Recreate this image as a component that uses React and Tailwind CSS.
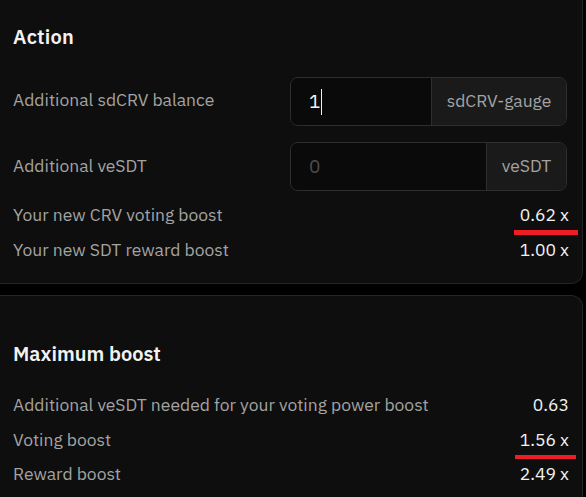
export default function App() {
  const font = { fontFamily: '"IBM Plex Sans", Inter, "Noto Sans", sans-serif' };
  const Val = ({ children, mark }) => (
    <span className="relative inline-block text-[17.5px] leading-[24px] text-[#f2f2f2]">
      {children}
      {mark && <span className={`absolute bg-[#ee1c25] ${mark}`} />}
    </span>
  );
  const Label = ({ children }) => (
    <span className="text-[17.5px] leading-[24px] text-[#a3a3a3]">{children}</span>
  );
  return (
    <div className="h-[497px] w-[586px] overflow-hidden bg-black" style={font}>
      <div className="ml-[-3px] w-[586px] rounded-br-[12px] border-r border-b border-[#232323] bg-[#0e0e0e] pl-[16px] pr-[13px] pt-[23px] pb-[16px]">
        <h2 className="h-[28px] text-[20px] leading-[28px] font-semibold tracking-[0.2px] text-[#f2f2f2]">Action</h2>
        <div className="mt-[26px] flex flex-col gap-[16px]">
          <div className="flex items-center justify-between">
            <div className="mt-[-4px]"><Label>Additional sdCRV balance</Label></div>
            <div className="mr-[2px] flex h-[49px] w-[277px] overflow-hidden rounded-[8px] border border-[#2e2e2e]">
              <div className="flex flex-1 items-center bg-[#0a0a0a] pl-[18px] text-[19px] text-[#f2f2f2]">
                1<span className="ml-[1px] h-[26px] w-[1px] bg-[#f2f2f2]" />
              </div>
              <div className="flex w-[135px] items-center justify-center border-l border-[#2e2e2e] bg-[#1a1a1a] text-[17.5px] text-[#a3a3a3]">sdCRV-gauge</div>
            </div>
          </div>
          <div className="flex items-center justify-between">
            <div className="mt-[-2px]"><Label>Additional veSDT</Label></div>
            <div className="mr-[2px] flex h-[49px] w-[277px] overflow-hidden rounded-[8px] border border-[#2e2e2e]">
              <div className="flex flex-1 items-center bg-[#0a0a0a] pl-[18px] text-[19px] text-[#4d4d4d]">0</div>
              <div className="flex w-[80px] items-center justify-center border-l border-[#2e2e2e] bg-[#1a1a1a] text-[17.5px] text-[#a3a3a3]">veSDT</div>
            </div>
          </div>
        </div>
        <div className="mt-[6px] flex flex-col">
          <div className="flex h-[35px] items-center justify-between">
            <Label>Your new CRV voting boost</Label>
            <Val mark="left-[-6px] right-[-9px] top-[27px] h-[5px]">0.62 x</Val>
          </div>
          <div className="flex h-[35px] items-center justify-between">
            <Label>Your new SDT reward boost</Label>
            <Val>1.00 x</Val>
          </div>
        </div>
      </div>
      <div className="mt-[11px] ml-[-3px] h-[300px] w-[586px] rounded-tr-[12px] border-t border-r border-[#262626] bg-[#0e0e0e] pl-[16px] pr-[13px] pt-[44px]">
        <h2 className="h-[28px] text-[20px] leading-[28px] font-semibold text-[#f2f2f2]">Maximum boost</h2>
        <div className="mt-[20px] flex flex-col">
          <div className="flex h-[34.5px] items-center justify-between">
            <Label>Additional veSDT needed for your voting power boost</Label>
            <Val>0.63</Val>
          </div>
          <div className="flex h-[34.5px] items-center justify-between">
            <Label>Voting boost</Label>
            <Val mark="left-[-5px] right-[-7px] top-[27px] h-[4px]">1.56 x</Val>
          </div>
          <div className="flex h-[34.5px] items-center justify-between">
            <Label>Reward boost</Label>
            <Val>2.49 x</Val>
          </div>
        </div>
      </div>
    </div>
  );
}
